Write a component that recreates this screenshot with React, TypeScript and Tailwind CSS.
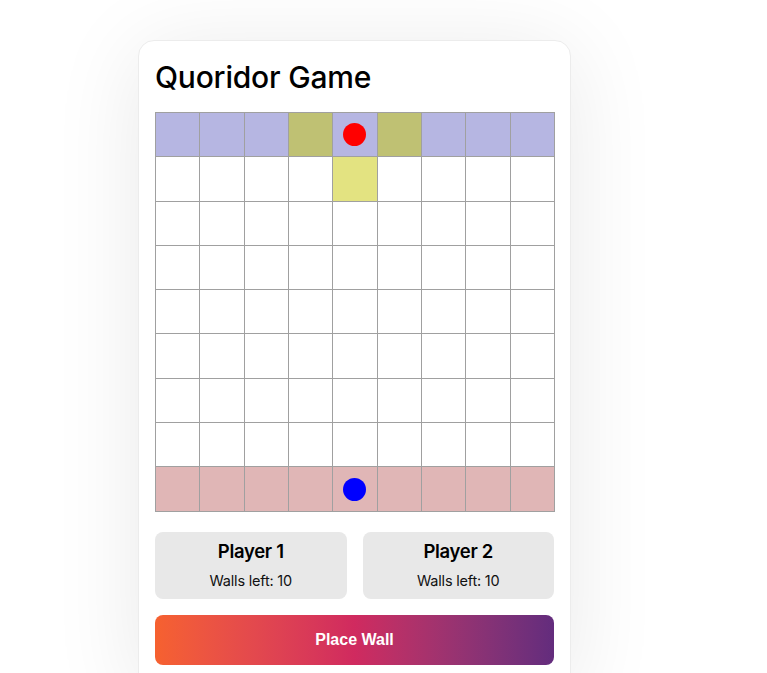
import React from "react";

const SIZE = 9;

type Cell = { row: number; col: number };

function cellColor({ row, col }: Cell) {
  if (row === 0 && (col === 3 || col === 5)) return "bg-[#bfc173]";
  if (row === 1 && col === 4) return "bg-[#e3e381]";
  if (row === 0) return "bg-[#b6b6e2]";
  if (row === SIZE - 1) return "bg-[#e0b6b6]";
  return "bg-white";
}

function Board() {
  const cells: Cell[] = [];
  for (let row = 0; row < SIZE; row++) {
    for (let col = 0; col < SIZE; col++) cells.push({ row, col });
  }

  return (
    <div className="grid w-[400px] grid-cols-9 gap-px bg-[#a0a0a0] p-px">
      {cells.map((cell) => (
        <div
          key={`${cell.row}-${cell.col}`}
          className={`flex h-[43.3px] items-center justify-center ${cellColor(cell)}`}
        >
          {cell.row === 0 && cell.col === 4 ? (
            <span className="h-[23px] w-[23px] rounded-full bg-[#ff0000]" />
          ) : null}
          {cell.row === SIZE - 1 && cell.col === 4 ? (
            <span className="h-[23px] w-[23px] rounded-full bg-[#0000ff]" />
          ) : null}
        </div>
      ))}
    </div>
  );
}

function PlayerCard({ name, walls }: { name: string; walls: number }) {
  return (
    <div className="flex h-[67px] flex-col items-center justify-center gap-[10px] rounded-lg bg-[#e8e8e8]">
      <div className="text-[18.5px] font-semibold leading-[22px] tracking-[-0.3px] text-black">{name}</div>
      <div className="text-[14.5px] leading-[18px] tracking-[-0.2px] text-[#111]">Walls left: {walls}</div>
    </div>
  );
}

export default function App() {
  return (
    <div
      className="min-h-screen overflow-hidden bg-white pl-[138px] pt-10"
      style={{ fontFamily: "Inter, 'Noto Sans', sans-serif" }}
    >
      <div className="w-[433px] rounded-2xl border border-[#ececec] bg-white px-4 pb-6 pt-4 shadow-[0_10px_90px_rgba(0,0,0,0.09)]">
        <h1 className="mb-[17px] mt-[2px] text-[30px] font-medium leading-[36px] tracking-[-0.2px] text-black">
          Quoridor Game
        </h1>

        <Board />

        <div className="mt-5 grid grid-cols-2 gap-4">
          <PlayerCard name="Player 1" walls={10} />
          <PlayerCard name="Player 2" walls={10} />
        </div>

        <button
          type="button"
          className="mt-4 h-[50px] w-full rounded-lg bg-gradient-to-r from-[#f6612f] via-[#d02a5f] to-[#632c7d] text-[16px] font-bold text-white"
          style={{ fontFamily: "'Liberation Sans', Arial, sans-serif" }}
        >
          Place Wall
        </button>
      </div>
    </div>
  );
}
